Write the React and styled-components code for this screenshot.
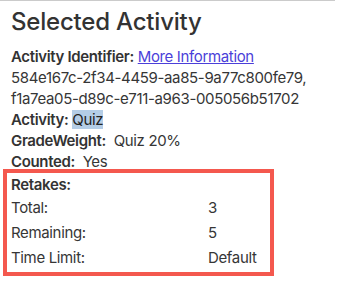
import React from "react";
import styled, { createGlobalStyle } from "styled-components";

const GlobalStyle = createGlobalStyle`
  body {
    margin: 0;
    background: #ffffff;
    font-family: Inter, "Open Sans", "Liberation Sans", sans-serif;
    color: #363636;
  }
`;

const retakes = [
  { label: "Total:", value: "3" },
  { label: "Remaining:", value: "5" },
  { label: "Time Limit:", value: "Default" },
];

const App = () => {
  return (
    <>
      <GlobalStyle />
      <Panel>
        <Title>Selected Activity</Title>
        <Field>
          <Label>Activity Identifier:</Label> <Link href="#">More Information</Link>
        </Field>
        <Field>584e167c-2f34-4459-aa85-9a77c800fe79,</Field>
        <Field>f1a7ea05-d89c-e711-a963-005056b51702</Field>
        <Field>
          <Label>Activity:</Label> <Selected>Quiz</Selected>
        </Field>
        <Field>
          <Label>GradeWeight:</Label>&nbsp; Quiz 20%
        </Field>
        <Field>
          <Label>Counted:</Label>&nbsp; Yes
        </Field>
        <RetakesBox>
          <RetakesHeading>Retakes:</RetakesHeading>
          {retakes.map((row) => (
            <React.Fragment key={row.label}>
              <Cell>{row.label}</Cell>
              <Cell>{row.value}</Cell>
            </React.Fragment>
          ))}
        </RetakesBox>
      </Panel>
    </>
  );
};

export default App;

const Panel = styled.div`
  width: 335px;
  box-sizing: border-box;
  border-top: 1px solid #cbcbcb;
  padding: 0 0 0 11px;
`;

const Title = styled.h2`
  margin: 6px 0 9px;
  font-size: 24px;
  line-height: 30px;
  font-weight: 500;
  color: #333333;
  letter-spacing: -0.2px;
`;

const Field = styled.div`
  font-size: 15px;
  line-height: 21px;
  letter-spacing: -0.35px;
  white-space: nowrap;
`;

const Label = styled.span`
  font-weight: 600;
  color: #333333;
`;

const Link = styled.a`
  color: #4b3fd9;
  text-decoration: underline;
`;

const Selected = styled.span`
  background: #b4cde6;
  color: #222222;
`;

const RetakesBox = styled.div`
  display: grid;
  grid-template-columns: 197px auto;
  grid-template-rows: 22px repeat(3, 25px);
  align-items: center;
  width: 271px;
  box-sizing: border-box;
  margin: -3px 0 0 -8px;
  padding: 0 4px 2px;
  border: 4px solid #f4584e;
  font-size: 15px;
  letter-spacing: -0.35px;
`;

const RetakesHeading = styled.div`
  grid-column: 1 / -1;
  line-height: 21px;
  font-weight: 600;
  color: #333333;
`;

const Cell = styled.div`
  line-height: 21px;
`;
